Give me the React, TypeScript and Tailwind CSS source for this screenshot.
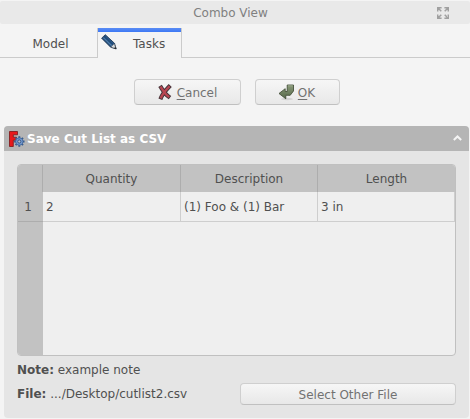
import React from 'react';

function FloatIcon() {
  return (
    <svg width="12" height="12" viewBox="0 0 12 12" fill="none" stroke="#a0a0a0" strokeWidth="1.5">
      <path d="M.7 4.600V.7h3.900M.7.7l3.600 3.600M7.400.7h3.900v3.900M11.300.7L7.700 4.300M.7 7.400v3.900h3.900M.7 11.300l3.600-3.600M11.300 7.400v3.900H7.400M11.300 11.300L7.700 7.700" />
    </svg>
  );
}

function PencilIcon() {
  return (
    <svg width="16" height="16" viewBox="0 0 16 16">
      <path d="M.6 4.2L4.3.7l9.2 8.6 1.7 5.6-5.5-1.6z" fill="#204a78" stroke="#17304d" strokeWidth=".8" />
      <path d="M2.4 3.6l8.4 8.2" stroke="#4d7ba8" strokeWidth="1.3" />
      <path d="M4.4 2l8.4 8" stroke="#2d5e90" strokeWidth="1" />
      <path d="M10 13l3.2-3.2 1.8 5z" fill="#d8dbdc" stroke="#555" strokeWidth=".4" />
      <path d="M13 14.3l1.4-1.4.9 2.2z" fill="#111" />
    </svg>
  );
}

function CrossIcon() {
  return (
    <svg width="14" height="16" viewBox="0 0 14 16" strokeLinecap="square" fill="none">
      <path d="M3.200 3.700C5 6.500 7 10 10.300 12.400M10.800 3C8 6 4.800 9.500 3.200 13.300" stroke="#45343a" strokeWidth="4.200" />
      <path d="M3.200 3.700C5 6.500 7 10 10.300 12.400M10.800 3C8 6 4.800 9.500 3.200 13.300" stroke="#b84652" strokeWidth="2.400" />
    </svg>
  );
}

function ReturnIcon() {
  return (
    <svg width="17" height="17" viewBox="0 0 17 17">
      <defs>
        <linearGradient id="olive" x1="0" y1="0" x2="0" y2="1">
          <stop offset="0" stopColor="#8a9a79" />
          <stop offset="1" stopColor="#56694a" />
        </linearGradient>
      </defs>
      <ellipse cx="9" cy="15" rx="6" ry="1.200" fill="#d2d2d2" />
      <path d="M9.200 1h6.300v6L12.200 11.300H7.800v3.500L1 9.500 7.200 4.700v2.800h2z" fill="url(#olive)" stroke="#38452f" strokeWidth=".8" />
      <path d="M9.900 1.800h4.900" fill="none" stroke="#a9b69b" strokeWidth=".8" />
    </svg>
  );
}

function FreeCadIcon() {
  return (
    <svg width="16" height="16" viewBox="0 0 16 16">
      <path d="M.5.500h8v3.300H4.300V6.200H7.500v3H4.300v6.300H.5z" fill="#e8191c" stroke="#7a1518" strokeWidth=".8" />
      <g transform="translate(10.300 10.500)">
        <g stroke="#365a8c" strokeWidth="1.900">
          <path d="M0-5.200V5.200M-5.200 0H5.200" />
          <path d="M-3.700-3.700L3.700 3.700M-3.700 3.700L3.700-3.700" />
        </g>
        <circle r="3.700" fill="#769bd0" stroke="#3d6499" strokeWidth=".8" />
        <circle r="1.600" fill="#b9bdc4" stroke="#2e4f80" strokeWidth=".9" />
      </g>
    </svg>
  );
}

const button =
  'flex items-center justify-center border border-[#cfcfcf] border-b-[#c0c0c0] bg-linear-to-b from-[#f6f6f6] to-[#e8e8e8] text-[#727272]';

export default function App() {
  return (
    <div className="h-[419px] w-[470px] overflow-hidden bg-[#f4f4f4] pt-px font-['DejaVu_Sans','Liberation_Sans',sans-serif] text-[12px] leading-[14px] text-[#505050]">
      <header className="grid h-[23px] grid-cols-[1fr_auto_1fr] items-center rounded-[2px] bg-[#e9e9e9] pr-[21px] pl-[12px] text-[#808080]">
        <span />
        <h1>Combo View</h1>
        <span className="justify-self-end"><FloatIcon /></span>
      </header>

      <nav className="mt-1 flex h-[30px]">
        <button className="w-[97px] border-b border-[#cbcbcb] pt-[3px] pl-1">Model</button>
        <div className="flex w-[85px] flex-col border-x border-[#cbcbcb]">
          <div className="h-1 shrink-0 bg-linear-to-b from-[#5a8cf4] to-[#3c78f4]" />
          <div className="flex pt-[2px] pl-[3px]">
            <PencilIcon />
            <span className="pt-[3px] pl-4">Tasks</span>
          </div>
        </div>
        <div className="flex-1 border-b border-[#cbcbcb]" />
      </nav>

      <div className="mt-[21px] flex h-[26px] gap-[14px] pl-[134px]">
        <button className={`${button} w-[107px] gap-[5px] rounded`}>
          <CrossIcon />
          <span className="pt-[2px]"><u className="underline-offset-2">C</u>ancel</span>
        </button>
        <button className={`${button} w-[85px] gap-[3px] rounded pr-[2px]`}>
          <ReturnIcon />
          <span className="pt-[2px]"><u className="underline-offset-2">O</u>K</span>
        </button>
      </div>

      <section className="mt-[21px] mr-[1px] ml-1 h-[292px] rounded bg-[#e5e5e5]">
        <div className="flex h-[25px] items-center rounded-t bg-[#b5b5b5] pr-[7px] pl-[5px] font-bold text-white">
          <FreeCadIcon />
          <h2 className="ml-[2px]">Save Cut List as CSV</h2>
          <svg className="ml-auto" width="9" height="7" viewBox="0 0 9 7">
            <path d="M.8 5L4.500 1.500 8.200 5" fill="none" stroke="#f4f4f4" strokeWidth="2" />
          </svg>
        </div>

        <div className="mt-[13px] ml-[13px] flex h-[192px] w-[439px] flex-col overflow-hidden rounded border border-[#c0c0c0] bg-[#efefef]">
          <div className="grid h-[27px] shrink-0 grid-cols-[25px_138px_137px_1fr] bg-[#c2c2c2] text-center leading-[29px]">
            <span className="border-r border-b border-[#adadad]" />
            <span className="border-r border-[#adadad]">Quantity</span>
            <span className="border-r border-[#adadad]">Description</span>
            <span>Length</span>
          </div>
          <div className="grid h-[30px] shrink-0 grid-cols-[25px_138px_137px_1fr] leading-[31px]">
            <span className="h-[30px] border-b border-[#adadad] bg-[#c2c2c2] pr-[5px] text-center">1</span>
            <span className="h-[30px] border-r border-b border-[#cecece] pl-[3px]">2</span>
            <span className="h-[30px] border-r border-b border-[#cecece] pl-[3px]">(1) Foo &amp; (1) Bar</span>
            <span className="h-[30px] border-r border-b border-[#cecece] pl-[3px]">3 in</span>
          </div>
          <div className="w-[25px] flex-1 bg-[#c2c2c2]" />
        </div>

        <p className="mt-[7px] ml-[13px]"><b>Note:</b> example note</p>
        <div className="mt-[6px] mr-[13px] ml-[13px] flex h-[22px] items-center justify-between">
          <p><b>File:</b> .../Desktop/cutlist2.csv</p>
          <button className={`${button} h-[22px] w-[216px] rounded pt-[2px]`}>Select Other File</button>
        </div>
      </section>
    </div>
  );
}
